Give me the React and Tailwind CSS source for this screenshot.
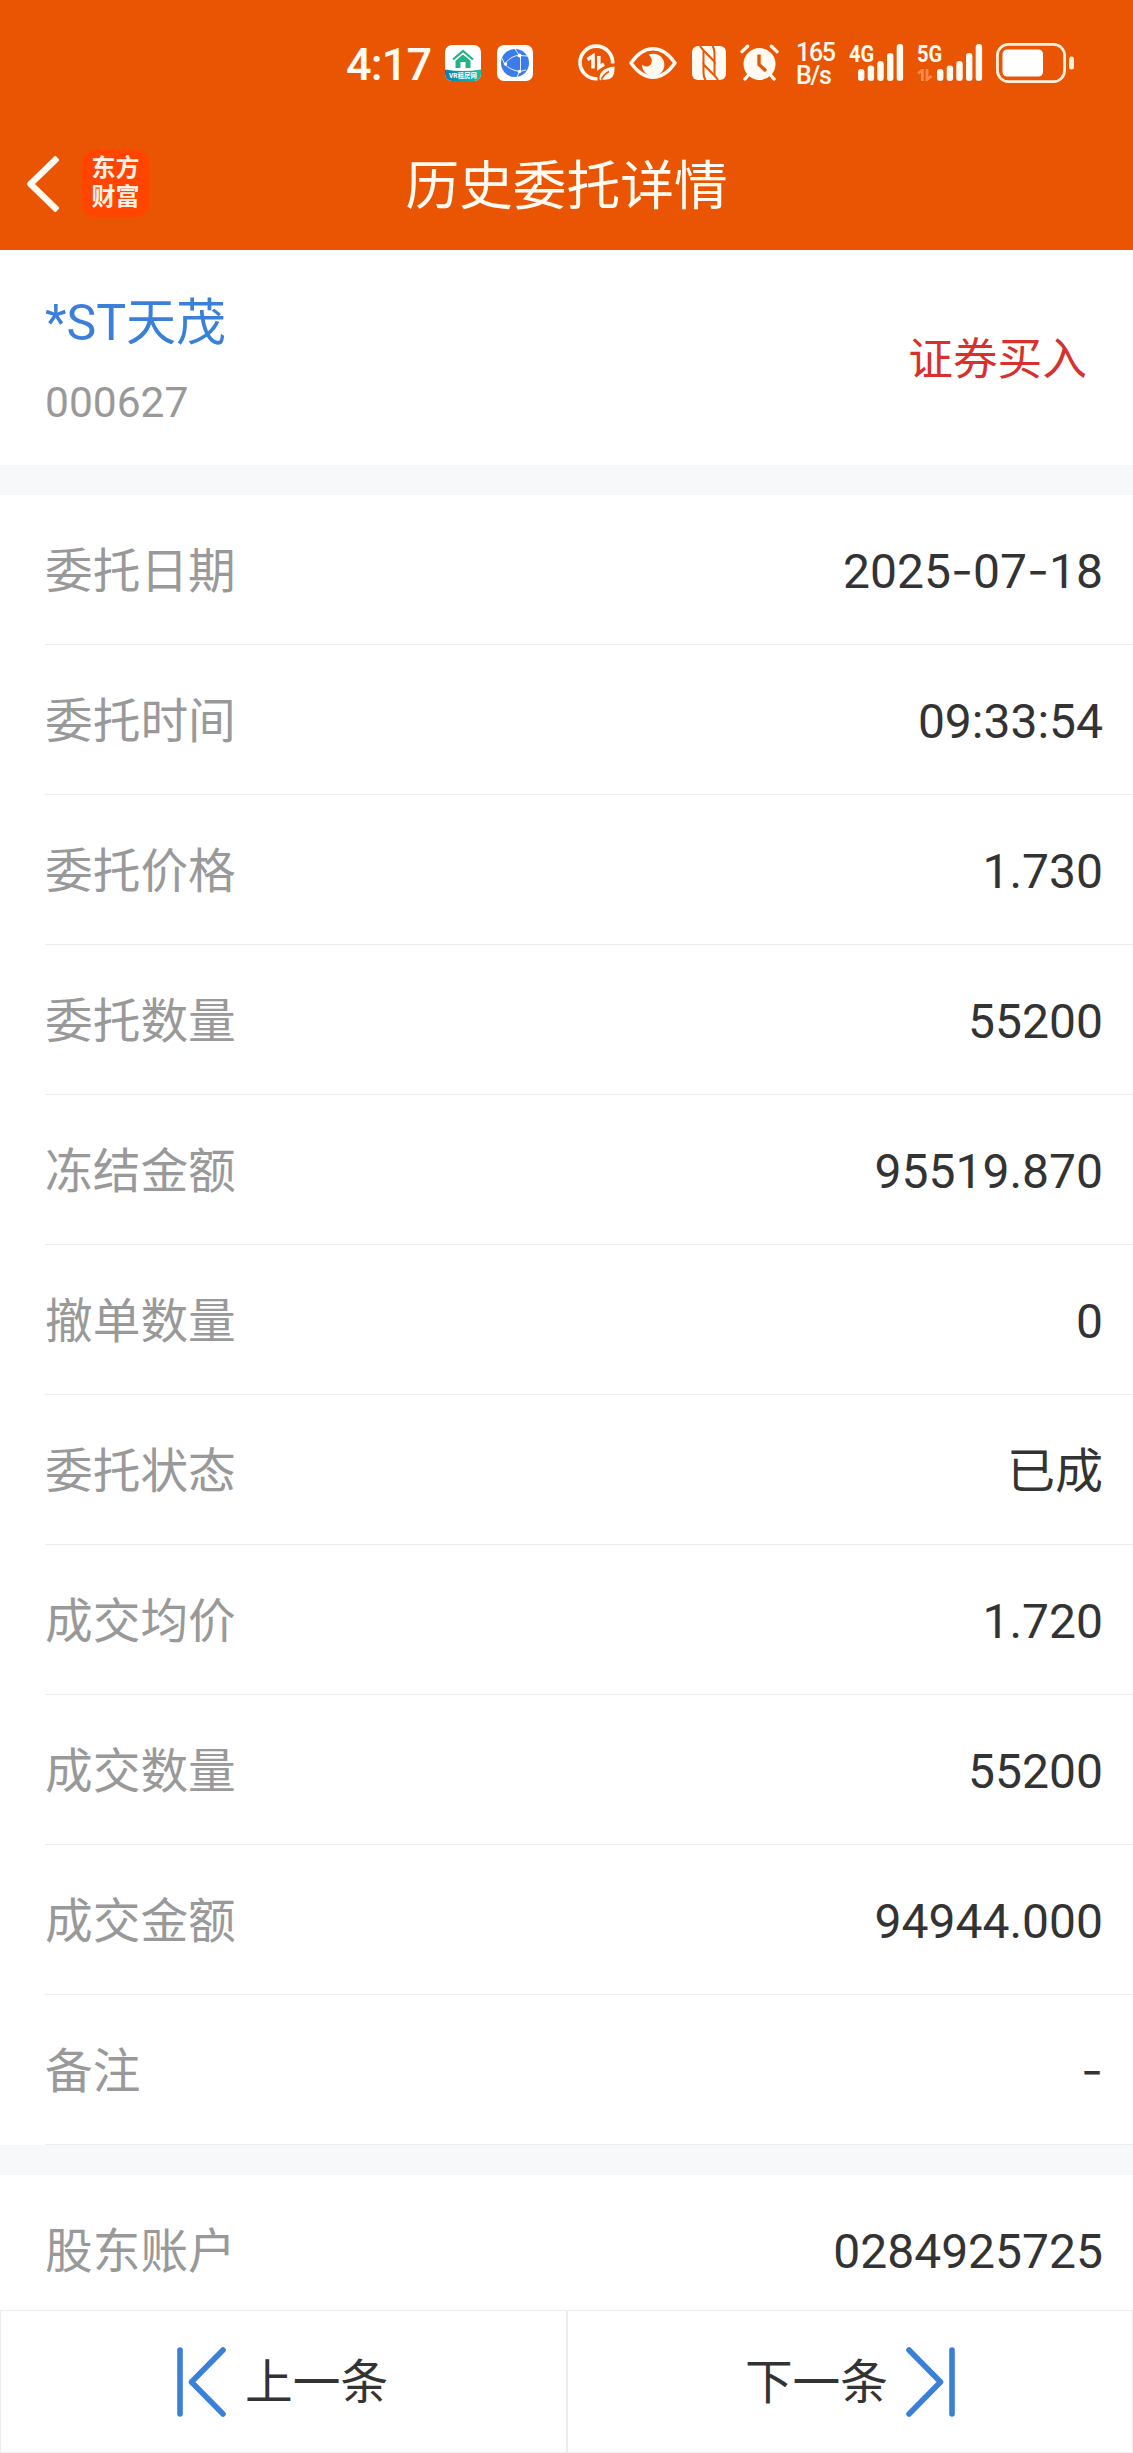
import React from "react"

const ORDER_FIELDS = [
  { label: "委托日期", value: "2025-07-18" },
  { label: "委托时间", value: "09:33:54" },
  { label: "委托价格", value: "1.730" },
  { label: "委托数量", value: "55200" },
  { label: "冻结金额", value: "95519.870" },
  { label: "撤单数量", value: "0" },
  { label: "委托状态", value: "已成" },
  { label: "成交均价", value: "1.720" },
  { label: "成交数量", value: "55200" },
  { label: "成交金额", value: "94944.000" },
  { label: "备注", value: "-" },
]

function HouseAppIcon() {
  return (
    <div className="relative ml-[14px] h-9 w-9 shrink-0 overflow-hidden rounded-[7px] bg-white">
      <svg viewBox="0 0 36 36" className="h-9 w-9">
        <defs>
          <linearGradient id="vrBand" x1="0" x2="1" y1="0" y2="0">
            <stop offset="0" stopColor="#0b7fb4" />
            <stop offset="1" stopColor="#1bbfa0" />
          </linearGradient>
        </defs>
        <path d="M0 24.5 Q18 27.5 36 24.5 V36 H0 Z" fill="url(#vrBand)" />
        <path d="M8 14.5 L18 6 L28 14.5" fill="none" stroke="#22b483" strokeWidth="2.2" />
        <path d="M18 9.5 L25.5 15.8 V23 H20.5 V17 H15.5 V23 H10.5 V15.8 Z" fill="#22b483" />
      </svg>
      <span className="absolute inset-x-0 bottom-[1px] text-center text-[6.5px] leading-[7px] font-bold whitespace-nowrap text-white">
        VR租房网
      </span>
    </div>
  )
}

function BrowserAppIcon() {
  return (
    <svg viewBox="0 0 36 36" className="ml-4 h-9 w-9 shrink-0">
      <rect width="36" height="36" rx="7" fill="#fff" />
      <circle cx="18" cy="18" r="14" fill="#3b7cec" />
      <g fill="none" stroke="#e8f1ff" strokeWidth="1">
        <path d="M22.5 10.5 Q15 10 7.5 19 Q13 25 22.5 26.5 M23.5 10.5 V26.5" />
        <path d="M18 4 L22.5 10.5 L31 11 M22.5 26.5 L20 32 M22.5 26.5 L29 25 M7.5 19 L5 13" />
      </g>
      <g fill="#fff">
        <circle cx="22.5" cy="10.5" r="2" />
        <circle cx="8.5" cy="19" r="1.7" />
        <circle cx="22.5" cy="26.5" r="1.7" />
      </g>
    </svg>
  )
}

function DataSaverIcon() {
  return (
    <svg viewBox="0 0 37 37" className="ml-[45px] h-[37px] w-[37px] shrink-0">
      <path
        d="M34.6 19.5 A16.3 16.3 0 1 0 19.5 34.7"
        fill="none"
        stroke="#fffaf2"
        strokeWidth="3.6"
      />
      <path d="M9.5 15.5 L15 12 V24.5 M20.8 12 V23.5 L26 20" fill="none" stroke="#fffaf2" strokeWidth="3.6" />
      <path d="M36.5 22.5 Q37.5 36 27 35.8 Q24.5 35.7 23.8 35 L22.4 36.6 L21.6 35.6 Q20.5 24.5 36.5 22.5 Z" fill="#fffaf2" />
      <path d="M23.5 35 Q26 30 31 27.5" fill="none" stroke="#ea5504" strokeWidth="1.4" />
    </svg>
  )
}

function EyeIcon() {
  return (
    <svg viewBox="0 0 48 32" className="ml-[14px] h-8 w-12 shrink-0">
      <path
        d="M2 16 Q12 1.8 24 1.8 Q36 1.8 46 16 Q36 30.2 24 30.2 Q12 30.2 2 16 Z"
        fill="none"
        stroke="#fffaf2"
        strokeWidth="3.4"
        strokeLinejoin="round"
      />
      <path
        d="M19.8 7.6 A11.2 11.2 0 1 1 13 17.4 Q18 21.6 21.6 17.8 Q24.8 13 19.8 7.6 Z"
        fill="#fffaf2"
      />
    </svg>
  )
}

function NfcIcon() {
  return (
    <svg viewBox="0 0 34 34" className="ml-[15px] h-[34px] w-[34px] shrink-0">
      <rect width="34" height="34" rx="6" fill="#fffaf2" />
      <g fill="none" stroke="#ea5504" strokeWidth="2">
        <path d="M8 0 Q10 3 12.5 5.5 L22.5 15.5 V7 Q22.5 3 20.5 0" />
        <path d="M26 34 Q24 31 21.5 28.5 L11.5 18.5 V27 Q11.5 31 13.5 34" />
        <path d="M11.5 5 V18.5 M22.5 15.5 V29" />
      </g>
    </svg>
  )
}

function AlarmIcon() {
  return (
    <svg viewBox="0 0 39 37" className="ml-[14px] h-[37px] w-[39px] shrink-0">
      <circle cx="19.5" cy="20" r="16" fill="#fffaf2" />
      <g fill="none" stroke="#fffaf2" strokeWidth="3.4" strokeLinecap="round">
        <path d="M2 7.6 L7.6 2.2 M31.4 2.2 L37 7.6 M8 31.5 L5 35 M31 31.5 L34 35" />
      </g>
      <path d="M19 10.5 V20.5 L26 27" fill="none" stroke="#ea5504" strokeWidth="3.4" />
    </svg>
  )
}

function SignalBars({ label, children, className }) {
  return (
    <div className={`relative h-[37px] shrink-0 ${className}`}>
      <span className="absolute top-0 left-0 origin-left scale-x-[.82] text-[24.5px] leading-[19px] font-bold">
        {label}
      </span>
      {children}
      <svg viewBox="0 0 46 37" className="absolute right-0 bottom-0 h-[37px] w-[46px]" fill="#fffaf2">
        <rect x="0" y="25" width="6.4" height="12" rx="3" />
        <rect x="9.7" y="21.5" width="6.4" height="15.5" rx="3" />
        <rect x="19.3" y="17" width="6.4" height="20" rx="3" />
        <rect x="29" y="9" width="6.4" height="28" rx="3" />
        <rect x="38.7" y="0" width="6.4" height="37" rx="3" />
      </svg>
    </div>
  )
}

function BatteryIcon() {
  return (
    <svg viewBox="0 0 79 40" className="ml-[13px] h-10 w-[79px] shrink-0">
      <rect x="1.4" y="1.4" width="67.2" height="37.2" rx="11" fill="none" stroke="#fff1dc" strokeWidth="2.8" />
      <rect x="6.5" y="6.5" width="40.5" height="27" rx="4.5" fill="#fff" />
      <rect x="73" y="13.5" width="5" height="13" rx="2.5" fill="#fff1dc" />
    </svg>
  )
}

function StatusBar() {
  return (
    <div className="flex h-[125px] items-center pl-[346px] text-[#fffaf2]">
      <span className="w-[85px] shrink-0 pt-[3px] text-[45px] leading-none font-medium tracking-[-0.8px]">
        4:17
      </span>
      <HouseAppIcon />
      <BrowserAppIcon />
      <DataSaverIcon />
      <EyeIcon />
      <NfcIcon />
      <AlarmIcon />
      <div className="ml-[17px] w-[40px] shrink-0 pt-[3px] text-[25px] leading-[23px] font-medium tracking-[-1.3px]">
        165
        <br />
        B/s
      </div>
      <SignalBars label="4G" className="ml-[13px] w-[55px]" />
      <SignalBars label="5G" className="ml-[13px] w-[66px]">
        <svg viewBox="0 0 16 12" className="absolute bottom-0 left-0 h-3 w-4">
          <path d="M1 4.5 L5.4 1.2 V12 M10 0 V10.5 L14.5 7" fill="none" stroke="#ff8a4d" strokeWidth="2.8" />
        </svg>
      </SignalBars>
      <BatteryIcon />
    </div>
  )
}

function NavBar() {
  return (
    <div className="flex h-[125px] items-center pb-2">
      <div className="flex flex-1 items-center">
        <svg viewBox="0 0 33 56" className="ml-[26px] h-14 w-[33px]">
          <path d="M29.2 4 L4.4 28 L29.2 52" fill="none" stroke="#fffaf2" strokeWidth="6.4" strokeLinecap="square" strokeLinejoin="round" />
        </svg>
        <div className="ml-[23px] flex h-[67px] w-[67px] flex-col items-center justify-center rounded-[13px] bg-[#ff4500] pb-[2px] text-[24px] leading-[29px] font-bold text-[#fff1e6]">
          <div>东方</div>
          <div>财富</div>
        </div>
      </div>
      <h1 className="pt-[6px] text-[53.7px] leading-none text-[#fffaf2]">历史委托详情</h1>
      <div className="flex-1" />
    </div>
  )
}

function FieldValue({ value }) {
  return (
    <span className="pt-1 text-[48px] leading-none text-[#333]">
      {value.split(/(-)/).map((part, index) =>
        part === "-" ? (
          <span key={index} className="inline-block scale-y-90 font-['Inter']">
            -
          </span>
        ) : (
          part
        ),
      )}
    </span>
  )
}

function FieldRow({ label, value }) {
  return (
    <div className="h-[150px] shrink-0 pl-[45px]">
      <div className="flex h-full items-center justify-between border-b border-[#ededed] pr-[30px]">
        <span className="pt-[7px] text-[47.7px] leading-none text-[#999]">{label}</span>
        <FieldValue value={value} />
      </div>
    </div>
  )
}

function App() {
  return (
    <div className="flex h-[2453px] w-[1133px] flex-col overflow-hidden bg-white font-['Roboto','Noto_Sans_CJK_SC',sans-serif]">
      <header className="shrink-0 bg-[#ea5504]">
        <StatusBar />
        <NavBar />
      </header>

      <main className="flex min-h-0 flex-1 flex-col overflow-hidden">
        <section className="flex h-[215px] shrink-0 items-center justify-between pr-[46px] pl-[45px]">
          <div className="pt-[10px]">
            <div className="text-[50px] leading-[72px] text-[#3b80d8]">*ST天茂</div>
            <div className="mt-2 text-[42.5px] leading-[72px] text-[#999]">000627</div>
          </div>
          <div className="pt-[6px] text-[44.7px] leading-none text-[#d9302e]">证券买入</div>
        </section>

        <div className="h-[30px] shrink-0 bg-[#f6f8fa]" />

        <section className="shrink-0">
          {ORDER_FIELDS.map((field) => (
            <FieldRow key={field.label} label={field.label} value={field.value} />
          ))}
        </section>

        <div className="h-[30px] shrink-0 bg-[#f6f8fa]" />

        <FieldRow label="股东账户" value="0284925725" />
      </main>

      <footer className="grid h-[143px] shrink-0 grid-cols-2 border border-[#ececec] text-[47.7px] leading-none text-[#333]">
        <button type="button" className="flex items-center border-r border-[#ececec] pl-[175px]">
          <svg viewBox="0 0 52 72" className="h-[72px] w-[52px]" fill="none" stroke="#3b80d8" strokeWidth="5.6" strokeLinecap="round" strokeLinejoin="round">
            <path d="M4 4 V68 M47 4 L15.5 36 L47 68" />
          </svg>
          <span className="ml-[17px] pt-[5px]">上一条</span>
        </button>
        <button type="button" className="flex items-center justify-end border-l border-[#ececec] pr-[176px]">
          <span className="mr-[16px] pt-[5px]">下一条</span>
          <svg viewBox="0 0 52 72" className="h-[72px] w-[52px]" fill="none" stroke="#3b80d8" strokeWidth="5.6" strokeLinecap="round" strokeLinejoin="round">
            <path d="M48 4 V68 M5 4 L36.5 36 L5 68" />
          </svg>
        </button>
      </footer>
    </div>
  )
}

export default App
